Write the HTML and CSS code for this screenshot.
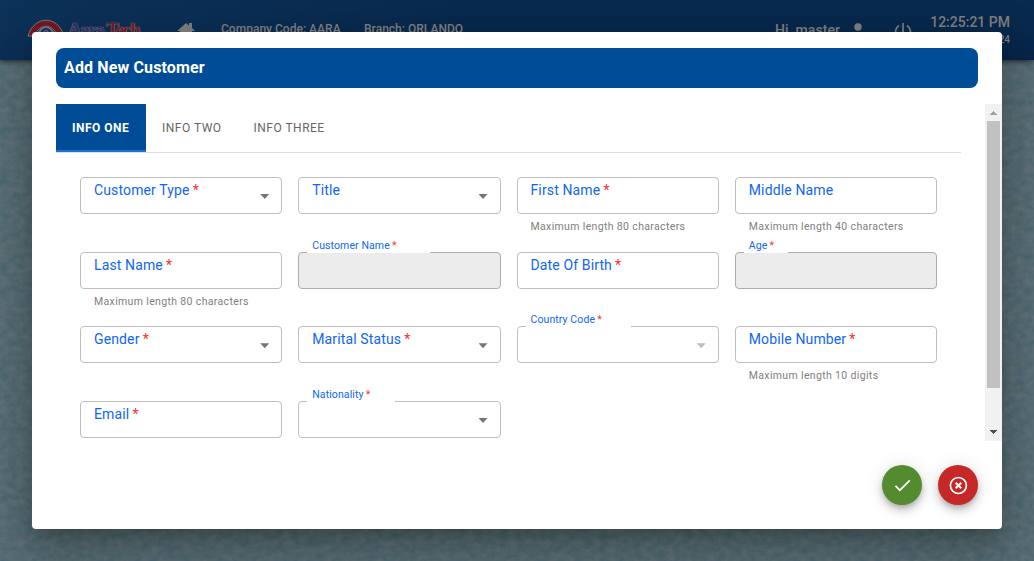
FILE: index.html
```html
<!DOCTYPE html>
<html lang="en">
<head>
<meta charset="utf-8">
<title>Add New Customer</title>
<link rel="stylesheet" href="styles.css">
</head>
<body>
<svg class="texture" width="1034" height="561" aria-hidden="true">
  <filter id="paper" x="0" y="0" width="100%" height="100%" color-interpolation-filters="sRGB">
    <feTurbulence type="fractalNoise" baseFrequency="0.12 0.15" numOctaves="5" seed="8"/>
    <feColorMatrix values="0.14 0 0 0 0.27  0.07 0 0 0 0.39  0.05 0 0 0 0.43  0 0 0 0 1"/>
  </filter>
  <rect width="1034" height="561" filter="url(#paper)"/>
</svg>
<header class="topbar">
  <div class="brand">
    <svg class="brand-mark" width="38" height="38" viewBox="0 0 38 38" fill="none">
      <path d="M1 17C7-4 31-4 37 17L31 17C25 4 13 4 7 17Z" fill="#741820" stroke="#777c86" stroke-width="1"/>
      <path d="M9 17C15 5 23 5 29 17" stroke="#777c86" stroke-width="1.2"/>
      <circle cx="19" cy="15" r="6.5" fill="#20285c" stroke="#777c86" stroke-width="1.2"/>
      <circle cx="19" cy="14" r="2.5" stroke="#777c86"/>
    </svg>
    <span class="brand-name"><span class="brand-a">Aara</span><span class="brand-t">Tech</span></span>
  </div>
  <svg class="home" width="18" height="18" viewBox="0 0 18 18"><path d="M9 1 0 9h3v8h4v-5h4v5h4V9h3l-3-3V1h-3v2.800z" fill="#808080"/></svg>
  <span class="company">Company Code: AARA</span>
  <span class="branch">Branch: ORLANDO</span>
  <span class="hello">Hi, master</span>
  <svg class="user" width="16" height="18" viewBox="0 0 16 18" fill="#808080"><circle cx="8" cy="4" r="3.700"/><path d="M1 17c0-9 14-9 14 0z"/></svg>
  <svg class="power" width="18" height="18" viewBox="0 0 18 18" fill="none" stroke="#808080" stroke-width="1.700"><path d="M9 0v9M5 2.500a7.500 7.500 0 1 0 8 0"/></svg>
  <div class="clock"><span class="time">12:25:21 PM</span><span class="date">15 Mar 2024</span></div>
</header>

<div class="overlay">
  <main class="dialog">
    <h1 class="title">Add New Customer</h1>
    <div class="content">
      <div class="pane">
        <nav class="tabs">
          <span class="tab active">INFO ONE</span>
          <span class="tab">INFO TWO</span>
          <span class="tab">INFO THREE</span>
        </nav>
        <form class="fields">
          <div class="field"><div class="box select"><label>Customer Type <i>*</i></label></div></div>
          <div class="field"><div class="box select"><label>Title</label></div></div>
          <div class="field"><div class="box"><label>First Name <i>*</i></label></div><small>Maximum length 80 characters</small></div>
          <div class="field"><div class="box"><label>Middle Name</label></div><small>Maximum length 40 characters</small></div>
          <div class="field"><div class="box"><label>Last Name <i>*</i></label></div><small>Maximum length 80 characters</small></div>
          <div class="field"><div class="box floated filled notch-name"><label>Customer Name <i>*</i></label></div></div>
          <div class="field"><div class="box"><label>Date Of Birth <i>*</i></label></div></div>
          <div class="field"><div class="box floated filled notch-age"><label>Age <i>*</i></label></div></div>
          <div class="field"><div class="box select"><label>Gender <i>*</i></label></div></div>
          <div class="field"><div class="box select"><label>Marital Status <i>*</i></label></div></div>
          <div class="field"><div class="box select muted floated notch-country"><label>Country Code <i>*</i></label></div></div>
          <div class="field"><div class="box"><label>Mobile Number <i>*</i></label></div><small>Maximum length 10 digits</small></div>
          <div class="field"><div class="box"><label>Email <i>*</i></label></div></div>
          <div class="field"><div class="box select floated notch-nation"><label>Nationality <i>*</i></label></div></div>
        </form>
      </div>
      <div class="scrollbar">
        <svg width="17" height="17" viewBox="0 0 17 17" shape-rendering="crispEdges"><path d="M5 11 8.500 7 12 11z" fill="#a3a3a3"/></svg>
        <div class="thumb"></div>
        <svg class="down" width="17" height="17" viewBox="0 0 17 17" shape-rendering="crispEdges"><path d="M5 6 8.500 10 12 6z" fill="#505050"/></svg>
      </div>
    </div>
    <footer class="actions">
      <button class="fab save" aria-label="Save"><svg width="24" height="24" viewBox="0 0 24 24"><path d="M9 16.170 4.830 12l-1.420 1.410L9 19 21 7l-1.410-1.410z" transform="translate(1.900 1.800) scale(.88)" fill="#fff"/></svg></button>
      <button class="fab cancel" aria-label="Cancel"><svg width="24" height="24" viewBox="0 0 24 24" fill="none" stroke="#fff" stroke-width="1.700"><circle cx="12.400" cy="12.500" r="8"/><path d="m9.600 9.700 5.600 5.600m0-5.600-5.600 5.600" stroke-width="2"/></svg></button>
    </footer>
  </main>
</div>
</body>
</html>
```
FILE: styles.css
```css
* { box-sizing: border-box; }
body { margin: 0; height: 561px; overflow: hidden; background: #566b76; font-family: Roboto, sans-serif; }
.texture { position: absolute; inset: 0; }
.topbar { position: relative; display: flex; height: 60px; padding: 0 24px 0 27px; color: #808080; background: linear-gradient(90deg, rgba(30, 80, 130, .22), transparent 45%), linear-gradient(#082a4e, #08294c 55%, #072548); box-shadow: 0 2px 5px rgba(0, 0, 0, .55); font-weight: 500; white-space: nowrap; }
.brand { display: flex; width: 151px; padding-top: 19px; gap: 3px; }
.brand-name { font: bold 19px/22px "Liberation Serif", serif; letter-spacing: -1.400px; text-shadow: 0 0 1px #8b8790, 0 0 1px #8b8790; }
.brand-a { color: #30316b; }
.brand-t { color: #7d1a22; margin-left: 3px; }
.home { margin-top: 22px; margin-left: -1px; }
.company, .branch { padding-top: 21px; font-size: 12px; line-height: 16px; letter-spacing: .02px; }
.company { margin-left: 26px; width: 143px; }
.hello { margin-left: auto; padding-top: 20px; width: 75px; font-size: 14px; line-height: 20px; letter-spacing: .1px; }
.user { margin: 23px 0 0; }
.power { margin: 23px 0 0 28px; }
.clock { display: flex; flex-direction: column; align-items: flex-end; width: 98px; padding-top: 14px; }
.time { font-size: 14px; line-height: 16px; }
.date { padding-top: 3px; font-size: 10px; line-height: 14px; }

.overlay { position: absolute; inset: 0; padding: 32px; }
.dialog { width: 970px; height: 497px; padding-top: 16px; background: #fff; border-radius: 4px; box-shadow: 0 11px 15px -7px rgba(0, 0, 0, .2), 0 24px 38px 3px rgba(0, 0, 0, .14), 0 9px 46px 8px rgba(0, 0, 0, .12); }
.title { margin: 0 24px; height: 40px; padding-left: 8px; border-radius: 8px; color: #fff; background: #004c97; font-size: 16px; line-height: 39px; font-weight: 700; letter-spacing: .13px; }
.content { display: flex; justify-content: space-between; height: 337px; margin-top: 16px; padding-left: 24px; }
.pane { width: 905px; }
.tabs { display: flex; height: 49px; border-bottom: 1px solid #dedede; }
.tab { height: 48px; padding: 0 16px; font-size: 12px; line-height: 48px; letter-spacing: .49px; font-weight: 400; color: #666; }
.active { width: 90px; padding-right: 0; color: #fff; background: #004c97; border-bottom: 2px solid #1976d2; font-weight: 700; letter-spacing: .5px; }
.fields { display: grid; grid-template-columns: repeat(4, 1fr); grid-auto-rows: 74.660px; column-gap: 16px; padding: 24px 24px 0; }
.box { position: relative; height: 37px; padding: 3px 13px; border: 1px solid #bebebe; border-radius: 4px; }
label { display: block; color: #0f66f5; font-size: 14px; line-height: 18px; letter-spacing: .13px; white-space: nowrap; }
label i { color: #ff2b2b; font-style: normal; margin-left: -.5px; }
small { display: block; padding: 6px 14px; color: #808080; font-size: 10.500px; line-height: 14px; letter-spacing: .35px; white-space: nowrap; }
.select::after { content: ""; position: absolute; right: 12px; top: 16px; width: 9px; height: 5px; background: #757575; clip-path: polygon(0 0, 100% 0, 50% 100%); }
.muted::after { background: #bdbdbd; }
.filled { background: #ececec; border-color: #adadad; }
.floated { padding: 0 13px; }
.floated label { font-size: 10.500px; line-height: 14px; margin-top: -14px; letter-spacing: .1px; }
.floated::before { content: ""; position: absolute; left: 8px; top: -1px; height: 1px; background: #fff; }
.notch-name::before { width: 123px; }
.notch-age::before { width: 44px; }
.notch-country::before { width: 105px; }
.notch-nation::before { width: 88px; }
.scrollbar { display: flex; flex-direction: column; width: 17px; background: #f1f1f1; }
.thumb { height: 267px; margin: 0 2px; background: #c1c1c1; }
.down { margin-top: auto; }
.actions { display: flex; justify-content: flex-end; gap: 16px; padding: 24px 24px 0; }
.fab { display: grid; place-items: center; width: 40px; height: 40px; padding: 0; border: 0; border-radius: 50%; box-shadow: 0 3px 5px -1px rgba(0, 0, 0, .2), 0 6px 10px rgba(0, 0, 0, .14), 0 1px 18px rgba(0, 0, 0, .12); }
.save { background: #558b2f; }
.cancel { background: #c62828; }
```
